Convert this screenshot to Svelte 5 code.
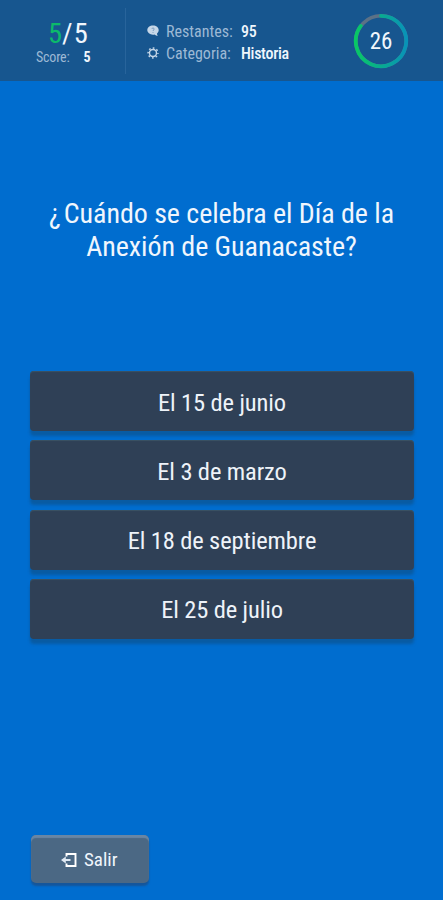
<script lang="ts">
  const options = ['El 15 de junio', 'El 3 de marzo', 'El 18 de septiembre', 'El 25 de julio'];

  let correct = 5;
  let answered = 5;
  let score = 5;
  let remaining = 95;
  let category = 'Historia';
  let seconds = 26;
</script>

<div class="screen">
  <header class="topbar">
    <div class="score">
      <div class="tally"><span class="hit">{correct}</span><span class="slash">/</span>{answered}</div>
      <div class="points"><span class="muted">Score:</span><b>{score}</b></div>
    </div>

    <div class="info">
      <div class="row">
        <svg class="icon" viewBox="0 0 12 12">
          <path d="M6 .5C2.800.5.3 2.500.3 5.100S2.800 9.700 6 9.700c.5 0 1 0 1.500-.2 1 .9 2 1.300 3.300 1.300-.6-.7-.8-1.500-.8-2.300 1-.8 1.700-2 1.700-3.400C11.700 2.500 9.200.5 6 .5z" fill="#c6d7e8" />
          <path d="M4.800 3.900c.2-1.300 2.500-1.100 2.400.2C7.100 5 6 4.900 6 6M6 7v.8" fill="none" stroke="#6f94b8" stroke-width=".9" />
        </svg>
        <span class="key">Restantes:</span>
        <span class="val">{remaining}</span>
      </div>
      <div class="row">
        <svg class="icon" viewBox="0 0 12 12">
          <circle cx="6" cy="6" r="3.500" fill="none" stroke="#c6d7e8" stroke-width="1.400" />
          <circle cx="6" cy="6" r="4.900" fill="none" stroke="#c6d7e8" stroke-width="1.500" stroke-dasharray="1.700 2.148" stroke-dashoffset=".85" />
        </svg>
        <span class="key">Categoria:</span>
        <span class="val">{category}</span>
      </div>
    </div>

    <div class="timer">
      <svg viewBox="0 0 56 56">
        <defs>
          <linearGradient id="ring" x1="0" y1="0" x2="1" y2="0">
            <stop offset="0" stop-color="#08c865" />
            <stop offset="0.45" stop-color="#08ae8c" />
            <stop offset="1" stop-color="#0893b8" />
          </linearGradient>
        </defs>
        <circle cx="28" cy="28" r="25.200" fill="none" stroke="#5c7186" stroke-width="3.600" />
        <path d="M28 2.800A25.200 25.200 0 1 1 7.800 12.900" fill="none" stroke="url(#ring)" stroke-width="3.800" stroke-linecap="round" />
      </svg>
      <span class="seconds">{seconds}</span>
    </div>
  </header>

  <h1 class="question"><span class="open">¿</span>Cu<span class="wide">á</span>ndo se celebra el Día de la<br />Anexi<span class="wide">ó</span>n de Guanacaste?</h1>

  <div class="options">
    {#each options as option}
      <button class="option">{option}</button>
    {/each}
  </div>

  <footer>
    <button class="exit">
      <svg viewBox="0 0 17 16">
        <path d="M5.500 4.500V2H14.500v12H5.500v-2.500" fill="none" stroke="#fff" stroke-width="1.900" />
        <path d="M0 8L4.800 4.600v2.500H9.500v1.800H4.800v2.500z" fill="#dfe9f3" />
      </svg>
      <span>Salir</span>
    </button>
  </footer>
</div>

<style>
  :global(body) {
    margin: 0;
    background: #006dcf;
  }

  .screen {
    display: flex;
    flex-direction: column;
    box-sizing: border-box;
    height: 900px;
    background: #006dcf;
    color: #f0f6fd;
    font-family: 'Roboto Condensed', Roboto, sans-serif;
    font-stretch: 75%;
  }

  .topbar {
    display: flex;
    box-sizing: border-box;
    flex: none;
    height: 81px;
    padding-top: 8px;
    background: #17568f;
  }

  .score {
    box-sizing: border-box;
    width: 126px;
    height: 66px;
    padding: 9px 0 0 36px;
    border-right: 1px solid #28649b;
  }

  .tally {
    padding-left: 12px;
    font-size: 28.500px;
    font-weight: 450;
    line-height: 33px;
    white-space: nowrap;
  }

  .hit {
    color: #0cba6b;
  }

  .slash {
    margin: 0 1px 0 0;
  }

  .points {
    display: flex;
    gap: 14px;
    font-size: 14px;
    letter-spacing: -0.200px;
    line-height: 15px;
  }

  .muted,
  .key {
    color: #9db9d5;
  }

  .info {
    width: 228px;
    padding-top: 12px;
  }

  .row {
    display: flex;
    align-items: center;
    height: 22px;
    padding-left: 21px;
    font-size: 16px;
  }

  .icon {
    width: 12px;
    height: 12px;
    margin-right: 7px;
  }

  .key {
    width: 75px;
    white-space: nowrap;
  }

  .val {
    font-size: 16px;
    font-weight: 500;
    letter-spacing: -0.300px;
    white-space: nowrap;
  }

  .timer {
    display: grid;
    place-items: center;
    width: 56px;
    height: 56px;
    margin: 5px 0 0 -1px;
  }

  .timer svg,
  .seconds {
    grid-area: 1 / 1;
  }

  .timer svg {
    width: 56px;
    height: 56px;
  }

  .seconds {
    font-size: 23px;
    font-weight: 450;
  }

  .question {
    flex: none;
    height: 174px;
    margin: 116px 0 0;
    font-size: 28px;
    font-weight: 400;
    letter-spacing: -0.060px;
    line-height: 33px;
    text-align: center;
    white-space: nowrap;
  }

  .open {
    margin-right: 3px;
  }

  .wide {
    font-stretch: 100%;
  }

  .options {
    display: flex;
    flex-direction: column;
    gap: 9.300px;
    padding: 0 29px 0 30px;
  }

  .option {
    height: 60px;
    padding: 2px 0 0;
    border: 0;
    border-radius: 4px;
    background: #2f4056;
    box-shadow: inset 0 1px 1px #3b5364, 0 5px 3px rgba(12, 82, 140, 0.65);
    color: #eef3f9;
    font: inherit;
    font-size: 24.500px;
    letter-spacing: -0.120px;
  }

  footer {
    margin-top: auto;
    padding: 0 0 17px 31px;
  }

  .exit {
    display: flex;
    align-items: center;
    width: 118px;
    height: 48px;
    padding: 1px 0 0 30px;
    border: 0;
    border-radius: 5px;
    background: #4b6884;
    box-shadow: inset 0 3px 1px #6986a4, 0 3px 2px #15569a;
    color: #f0f6fd;
    font: inherit;
    font-size: 19px;
  }

  .exit svg {
    width: 17px;
    height: 16px;
    margin-right: 6px;
  }
</style>
